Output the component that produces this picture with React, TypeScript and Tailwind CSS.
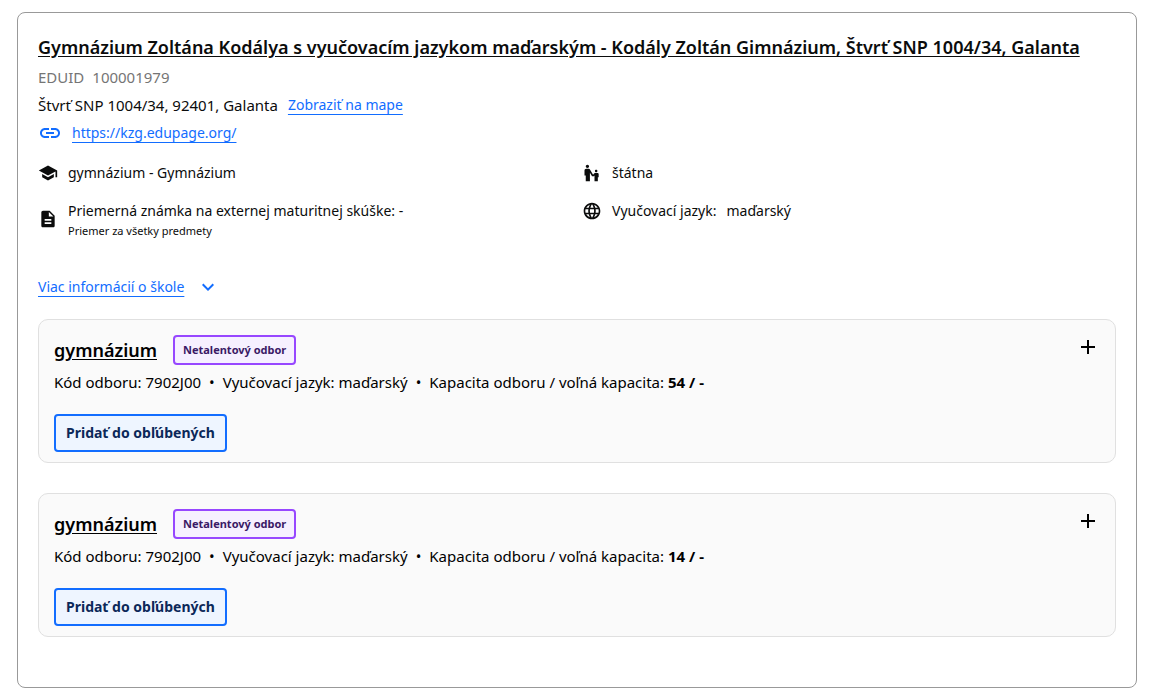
import {type ReactNode, useState} from 'react';
import {
	MdAdd,
	MdDescription,
	MdEscalatorWarning,
	MdExpandMore,
	MdLanguage,
	MdLink,
	MdSchool,
} from 'react-icons/md';

type Programme = {
	id: string;
	name: string;
	code: string;
	language: string;
	capacity: number;
};

const PROGRAMMES: Programme[] = [
	{
		id: 'a',
		name: 'gymnázium',
		code: '7902J00',
		language: 'maďarský',
		capacity: 54,
	},
	{
		id: 'b',
		name: 'gymnázium',
		code: '7902J00',
		language: 'maďarský',
		capacity: 14,
	},
];

function Fact({icon, children}: {icon: ReactNode; children: ReactNode}) {
	return (
		<li className="flex items-center gap-2.5">
			<span className="shrink-0 text-xl">{icon}</span>

			<div>{children}</div>
		</li>
	);
}

function ProgrammeCard({programme}: {programme: Programme}) {
	const [favourite, setFavourite] = useState(false);

	return (
		<article className="flex items-start justify-between rounded-[10px] border border-[#e0e0e0] bg-[#fafafa] px-[15px] pt-[15px] pb-2.5 text-black">
			<div>
				<div className="flex items-center gap-4">
					<h3 className="text-lg leading-7 font-semibold">
						<a className="underline underline-offset-2" href="#odbor">
							{programme.name}
						</a>
					</h3>

					<span className="rounded-sm border-2 border-[#9747ff] bg-[#f6f0ff] px-2 text-[11px] leading-[26px] font-bold text-[#3b1a66]">
						Netalentový odbor
					</span>
				</div>

				<p className="mt-[5px] flex flex-wrap gap-x-2 text-[15px] leading-6">
					<span>Kód odboru: {programme.code}</span>
					<span>•</span>
					<span>Vyučovací jazyk: {programme.language}</span>
					<span>•</span>
					<span>
						Kapacita odboru / voľná kapacita:{' '}
						<b>{programme.capacity} / -</b>
					</span>
				</p>

				<button
					aria-pressed={favourite}
					className="mt-5 rounded-sm border-2 border-[#126dff] bg-[#eef5ff] px-2.5 text-[14px] leading-[34px] font-bold text-[#0b2859]"
					onClick={() => setFavourite((value) => !value)}
				>
					Pridať do obľúbených
				</button>
			</div>

			<button aria-label="Zobraziť detail odboru" className="text-2xl">
				<MdAdd />
			</button>
		</article>
	);
}

export default function App() {
	return (
		<main className="mt-3 mr-3 mb-2.5 ml-[17px] rounded-lg border border-[#999] bg-white px-5 pt-5 pb-[50px] font-['Noto_Sans',sans-serif] text-[14px] text-[#0b0c0c]">
			<h2 className="mb-0.5 text-lg leading-7 font-semibold">
				<a className="underline underline-offset-2" href="#skola">
					Gymnázium Zoltána Kodálya s vyučovacím jazykom maďarským -
					Kodály Zoltán Gimnázium, Štvrť SNP 1004/34, Galanta
				</a>
			</h2>

			<p className="flex gap-2 text-[15px] leading-7 text-[#757575]">
				<span>EDUID</span>
				<span>100001979</span>
			</p>

			<p className="flex gap-2.5 leading-7">
				<span className="text-[15px]">
					Štvrť SNP 1004/34, 92401, Galanta
				</span>
				<a
					className="text-[#126dff] underline underline-offset-4"
					href="#mapa"
				>
					Zobraziť na mape
				</a>
			</p>

			<p className="flex items-center gap-2.5 leading-7 text-[#126dff]">
				<MdLink className="text-2xl" />
				<a
					className="underline underline-offset-4"
					href="https://kzg.edupage.org/"
				>
					https://kzg.edupage.org/
				</a>
			</p>

			<ul className="mt-3.5 grid grid-cols-2 items-start gap-x-2.5 gap-y-3.5 leading-6">
				<Fact icon={<MdSchool />}>gymnázium - Gymnázium</Fact>
				<Fact icon={<MdEscalatorWarning />}>štátna</Fact>
				<Fact icon={<MdDescription />}>
					<p>Priemerná známka na externej maturitnej skúške: -</p>
					<p className="text-[11px] leading-4">
						Priemer za všetky predmety
					</p>
				</Fact>
				<Fact icon={<MdLanguage />}>
					<p className="flex gap-2.5">
						<span>Vyučovací jazyk:</span>
						<span>maďarský</span>
					</p>
				</Fact>
			</ul>

			<button className="mt-9 flex items-center gap-3 leading-6 text-[#126dff]">
				<span className="underline underline-offset-4">
					Viac informácií o škole
				</span>
				<MdExpandMore className="text-2xl" />
			</button>

			<section className="mt-5 flex flex-col gap-[30px]">
				{PROGRAMMES.map((programme) => (
					<ProgrammeCard key={programme.id} programme={programme} />
				))}
			</section>
		</main>
	);
}
